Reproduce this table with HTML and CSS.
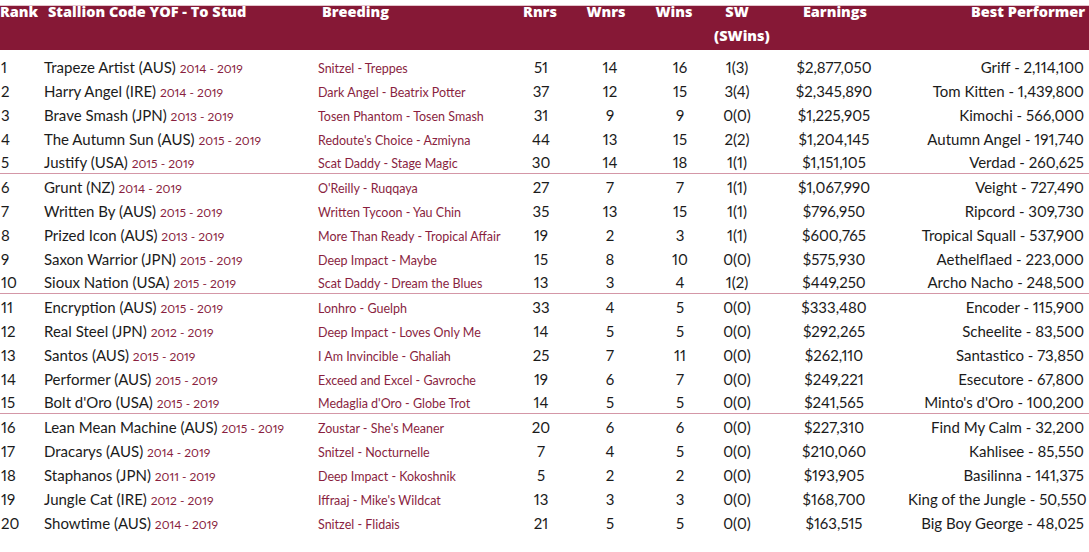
FILE: index.html
```html
<!DOCTYPE html>
<html>
<head>
<meta charset="utf-8">
<link rel="stylesheet" href="styles.css">
</head>
<body>
<div class="table">
  <div class="head">
    <div class="h rank">Rank</div>
    <div class="h stal">Stallion Code YOF - To Stud</div>
    <div class="h breed">Breeding</div>
    <div class="h c rnrs">Rnrs</div>
    <div class="h c wnrs">Wnrs</div>
    <div class="h c wins">Wins</div>
    <div class="h c sw">SW<br>(SWins)</div>
    <div class="h c earn">Earnings</div>
    <div class="h r best">Best Performer</div>
  </div>
  <div class="body">
    <div class="row"><span>1</span><span>Trapeze Artist (AUS) <em>2014 - 2019</em></span><span class="br">Snitzel - Treppes</span><span class="c">51</span><span class="c">14</span><span class="c">16</span><span class="c">1(3)</span><span class="c">$2,877,050</span><span class="r">Griff - 2,114,100</span></div>
    <div class="row"><span>2</span><span>Harry Angel (IRE) <em>2014 - 2019</em></span><span class="br">Dark Angel - Beatrix Potter</span><span class="c">37</span><span class="c">12</span><span class="c">15</span><span class="c">3(4)</span><span class="c">$2,345,890</span><span class="r">Tom Kitten - 1,439,800</span></div>
    <div class="row"><span>3</span><span>Brave Smash (JPN) <em>2013 - 2019</em></span><span class="br">Tosen Phantom - Tosen Smash</span><span class="c">31</span><span class="c">9</span><span class="c">9</span><span class="c">0(0)</span><span class="c">$1,225,905</span><span class="r">Kimochi - 566,000</span></div>
    <div class="row"><span>4</span><span>The Autumn Sun (AUS) <em>2015 - 2019</em></span><span class="br">Redoute's Choice - Azmiyna</span><span class="c">44</span><span class="c">13</span><span class="c">15</span><span class="c">2(2)</span><span class="c">$1,204,145</span><span class="r">Autumn Angel - 191,740</span></div>
    <div class="row sep"><span>5</span><span>Justify (USA) <em>2015 - 2019</em></span><span class="br">Scat Daddy - Stage Magic</span><span class="c">30</span><span class="c">14</span><span class="c">18</span><span class="c">1(1)</span><span class="c">$1,151,105</span><span class="r">Verdad - 260,625</span></div>
    <div class="row"><span>6</span><span>Grunt (NZ) <em>2014 - 2019</em></span><span class="br">O'Reilly - Ruqqaya</span><span class="c">27</span><span class="c">7</span><span class="c">7</span><span class="c">1(1)</span><span class="c">$1,067,990</span><span class="r">Veight - 727,490</span></div>
    <div class="row"><span>7</span><span>Written By (AUS) <em>2015 - 2019</em></span><span class="br">Written Tycoon - Yau Chin</span><span class="c">35</span><span class="c">13</span><span class="c">15</span><span class="c">1(1)</span><span class="c">$796,950</span><span class="r">Ripcord - 309,730</span></div>
    <div class="row"><span>8</span><span>Prized Icon (AUS) <em>2013 - 2019</em></span><span class="br">More Than Ready - Tropical Affair</span><span class="c">19</span><span class="c">2</span><span class="c">3</span><span class="c">1(1)</span><span class="c">$600,765</span><span class="r">Tropical Squall - 537,900</span></div>
    <div class="row"><span>9</span><span>Saxon Warrior (JPN) <em>2015 - 2019</em></span><span class="br">Deep Impact - Maybe</span><span class="c">15</span><span class="c">8</span><span class="c">10</span><span class="c">0(0)</span><span class="c">$575,930</span><span class="r">Aethelflaed - 223,000</span></div>
    <div class="row sep"><span>10</span><span>Sioux Nation (USA) <em>2015 - 2019</em></span><span class="br">Scat Daddy - Dream the Blues</span><span class="c">13</span><span class="c">3</span><span class="c">4</span><span class="c">1(2)</span><span class="c">$449,250</span><span class="r">Archo Nacho - 248,500</span></div>
    <div class="row"><span>11</span><span>Encryption (AUS) <em>2015 - 2019</em></span><span class="br">Lonhro - Guelph</span><span class="c">33</span><span class="c">4</span><span class="c">5</span><span class="c">0(0)</span><span class="c">$333,480</span><span class="r">Encoder - 115,900</span></div>
    <div class="row"><span>12</span><span>Real Steel (JPN) <em>2012 - 2019</em></span><span class="br">Deep Impact - Loves Only Me</span><span class="c">14</span><span class="c">5</span><span class="c">5</span><span class="c">0(0)</span><span class="c">$292,265</span><span class="r">Scheelite - 83,500</span></div>
    <div class="row"><span>13</span><span>Santos (AUS) <em>2015 - 2019</em></span><span class="br">I Am Invincible - Ghaliah</span><span class="c">25</span><span class="c">7</span><span class="c">11</span><span class="c">0(0)</span><span class="c">$262,110</span><span class="r">Santastico - 73,850</span></div>
    <div class="row"><span>14</span><span>Performer (AUS) <em>2015 - 2019</em></span><span class="br">Exceed and Excel - Gavroche</span><span class="c">19</span><span class="c">6</span><span class="c">7</span><span class="c">0(0)</span><span class="c">$249,221</span><span class="r">Esecutore - 67,800</span></div>
    <div class="row sep"><span>15</span><span>Bolt d'Oro (USA) <em>2015 - 2019</em></span><span class="br">Medaglia d'Oro - Globe Trot</span><span class="c">14</span><span class="c">5</span><span class="c">5</span><span class="c">0(0)</span><span class="c">$241,565</span><span class="r">Minto's d'Oro - 100,200</span></div>
    <div class="row"><span>16</span><span>Lean Mean Machine (AUS) <em>2015 - 2019</em></span><span class="br">Zoustar - She's Meaner</span><span class="c">20</span><span class="c">6</span><span class="c">6</span><span class="c">0(0)</span><span class="c">$227,310</span><span class="r">Find My Calm - 32,200</span></div>
    <div class="row"><span>17</span><span>Dracarys (AUS) <em>2014 - 2019</em></span><span class="br">Snitzel - Nocturnelle</span><span class="c">7</span><span class="c">4</span><span class="c">5</span><span class="c">0(0)</span><span class="c">$210,060</span><span class="r">Kahlisee - 85,550</span></div>
    <div class="row"><span>18</span><span>Staphanos (JPN) <em>2011 - 2019</em></span><span class="br">Deep Impact - Kokoshnik</span><span class="c">5</span><span class="c">2</span><span class="c">2</span><span class="c">0(0)</span><span class="c">$193,905</span><span class="r">Basilinna - 141,375</span></div>
    <div class="row"><span>19</span><span>Jungle Cat (IRE) <em>2012 - 2019</em></span><span class="br">Iffraaj - Mike's Wildcat</span><span class="c">13</span><span class="c">3</span><span class="c">3</span><span class="c">0(0)</span><span class="c">$168,700</span><span class="r">King of the Jungle - 50,550</span></div>
    <div class="row"><span>20</span><span>Showtime (AUS) <em>2014 - 2019</em></span><span class="br">Snitzel - Flidais</span><span class="c">21</span><span class="c">5</span><span class="c">5</span><span class="c">0(0)</span><span class="c">$163,515</span><span class="r">Big Boy George - 48,025</span></div>
  </div>
</div>
</body>
</html>
```

FILE: styles.css
```css
html, body {
  margin: 0;
  padding: 0;
  background: #fff;
}
body {
  font-family: "Lato", "Liberation Sans", sans-serif;
  font-variant-numeric: proportional-nums;
  color: #1b1b1b;
  width: 1089px;
  height: 552px;
  overflow: hidden;
}
.head, .row {
  display: grid;
  grid-template-columns: 44px 274px 190px 66px 72px 68px 46px 148px 176px;
  padding-right: 5px;
}
.head {
  height: 50px;
  background: linear-gradient(to bottom, #ffffff 0 5px, #e4c4cc 5px 6px, #861836 6px 50px);
  color: #fff;
  font-family: "Open Sans", "Lato", sans-serif;
  font-weight: 800;
  font-size: 14.5px;
  line-height: 24px;
  letter-spacing: 0;
}
.h.rank { padding-left: 0; }
.h.stal { padding-left: 4px; }
.h.breed { padding-left: 4px; }
.h.rnrs { padding-right: 2px; }
.h.wnrs { padding-right: 8px; }
.h.wins { padding-right: 12px; }
.h.earn { padding-left: 2px; }
.h.sw { padding-top: 0; }
.h.best { margin-right: -1px; }
.c { text-align: center; }
.r { text-align: right; }
.body {
  padding-top: 5px;
}
.row {
  height: 24px;
  line-height: 24px;
  font-size: 15px;
  white-space: nowrap;
  align-items: baseline;
}
.row > span:first-child { padding-left: 1px; }
.row.sep {
  height: 22px;
  line-height: 22px;
  border-bottom: 1px solid #d497a7;
  margin-bottom: 1px;
}
.row em {
  font-style: normal;
  font-size: 12px;
  color: #8a1f3f;
}
.row .br {
  font-size: 12.5px;
  color: #8a1f3f;
}
```
